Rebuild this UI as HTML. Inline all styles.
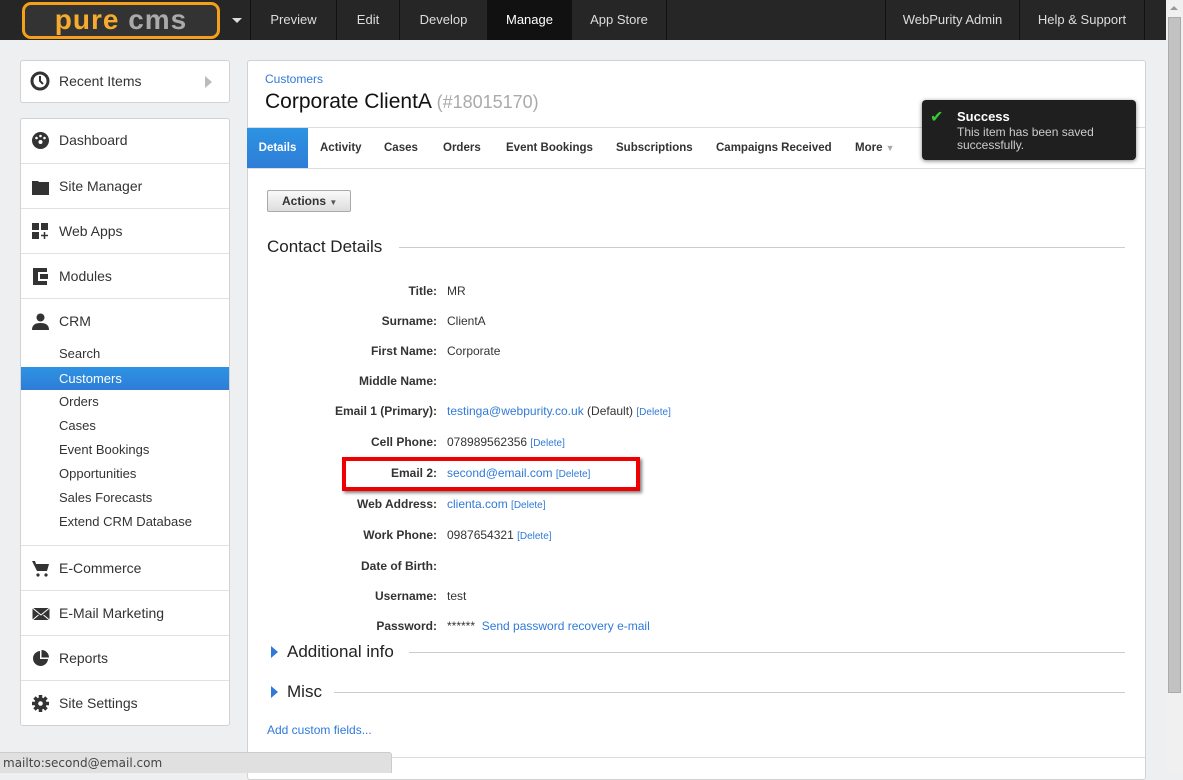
<!DOCTYPE html>
<html><head><style>
*{margin:0;padding:0;box-sizing:border-box}
body{width:1183px;height:773px;overflow:hidden;background:#eeeff1;font-family:"Liberation Sans",sans-serif;font-size:13px;color:#333;position:relative}
.a{position:absolute}
.top{left:0;top:0;width:1166px;height:40px;background:#262626}
.nav{top:0;height:40px;line-height:40px;color:#ddd;font-size:13px;text-align:center;border-left:1px solid #111}
.box{background:#fff;border:1px solid #d2d2d2;border-radius:3px}
.mi{left:21px;width:208px;height:45px;border-top:1px solid #e2e2e2;padding-left:38px;line-height:44px;font-size:14px;color:#333}
.ic{position:absolute;left:11px;top:14px;width:17px;height:17px}
.sub{left:21px;width:208px;height:24px;line-height:24px;padding-left:38px;font-size:13px;color:#333}
.lab{left:250px;width:187px;text-align:right;font-weight:bold;font-size:12px;color:#333}
.val{left:447px;font-size:12px;color:#333;white-space:nowrap}
.lnk{color:#2f7ad8}
.del{color:#2f7ad8;font-size:10px}
.tab{top:128px;height:40px;line-height:40px;font-size:11.5px;font-weight:bold;color:#333}
</style></head><body>
<div class="a top"></div>
<div class="a" style="left:22px;top:2px;width:198px;height:37px;border:3px solid #f5a01a;border-radius:9px;background:#333;text-align:center;line-height:30px;font-size:28px;font-weight:bold;letter-spacing:1px"><span style="color:#f5ac2e">pure</span> <span style="color:#aaa">cms</span></div>
<div class="a" style="left:232px;top:18px;border-left:5px solid transparent;border-right:5px solid transparent;border-top:5px solid #ddd"></div>
<div class="a nav" style="left:250px;width:86px">Preview</div>
<div class="a nav" style="left:336px;width:63px">Edit</div>
<div class="a nav" style="left:399px;width:88px">Develop</div>
<div class="a nav" style="left:487px;width:84px;background:#111;color:#fff">Manage</div>
<div class="a nav" style="left:571px;width:96px;border-right:1px solid #111">App Store</div>
<div class="a nav" style="left:885px;width:134px">WebPurity Admin</div>
<div class="a nav" style="left:1019px;width:126px;border-right:1px solid #111">Help &amp; Support</div>
<div class="a" style="left:1166px;top:0;width:17px;height:773px;background:#f0f0f0"></div>
<div class="a" style="left:1168px;top:17px;width:13px;height:676px;background:#c2c2c2;border:1px solid #aaa"></div>
<div class="a" style="left:1170px;top:6px;border-left:4px solid transparent;border-right:4px solid transparent;border-bottom:4px solid #999"></div>

<div class="a box" style="left:20px;top:60px;width:210px;height:43px"></div>
<svg class="a" style="left:30px;top:71px" width="20" height="20" viewBox="0 0 20 20"><circle cx="10" cy="10" r="8" fill="none" stroke="#333" stroke-width="3"/><path d="M10 5v5l3 3" fill="none" stroke="#333" stroke-width="2"/></svg>
<div class="a" style="left:59px;top:60px;line-height:42px;font-size:14px">Recent Items</div>
<div class="a" style="left:205px;top:76px;border-top:6px solid transparent;border-bottom:6px solid transparent;border-left:7px solid #bbb"></div>

<div class="a box" style="left:20px;top:118px;width:210px;height:608px"></div>
<div class="a mi" style="top:118px;border-top:none"><svg class="ic" viewBox="0 0 17 17"><circle cx="8.5" cy="8.5" r="8.5" fill="#333"/><circle cx="8.5" cy="4" r="1.3" fill="#fff"/><circle cx="4.5" cy="6" r="1.3" fill="#fff"/><circle cx="12.5" cy="6" r="1.3" fill="#fff"/><circle cx="8.5" cy="10" r="2" fill="#fff"/></svg>Dashboard</div>
<div class="a mi" style="top:163px"><svg class="ic" viewBox="0 0 17 17"><path d="M0 3h6l1 1h10v13H0z" fill="#333"/></svg>Site Manager</div>
<div class="a mi" style="top:208px"><svg class="ic" viewBox="0 0 17 17"><path d="M0 0h7v7H0zM9 0h7v7H9zM0 9h7v7H0z" fill="#333"/><path d="M12.5 9v7M9 12.5h7" stroke="#333" stroke-width="1.5"/></svg>Web Apps</div>
<div class="a mi" style="top:253px"><svg class="ic" viewBox="0 0 17 17"><path d="M1 0h14v4H6v9h9v4H1z M8 6h8v5H8z" fill="#333"/></svg>Modules</div>
<div class="a mi" style="top:298px"><svg class="ic" viewBox="0 0 17 17"><circle cx="8.5" cy="4.5" r="4" fill="#333"/><path d="M0 17c0-5 3-7 8.5-7s8.5 2 8.5 7z" fill="#333"/></svg>CRM</div>
<div class="a sub" style="top:342px">Search</div>
<div class="a sub" style="top:367px;background:linear-gradient(#2d93e2,#2e7dd8);color:#fff;height:23px">Customers</div>
<div class="a sub" style="top:390px">Orders</div>
<div class="a sub" style="top:414px">Cases</div>
<div class="a sub" style="top:438px">Event Bookings</div>
<div class="a sub" style="top:462px">Opportunities</div>
<div class="a sub" style="top:486px">Sales Forecasts</div>
<div class="a sub" style="top:510px">Extend CRM Database</div>
<div class="a mi" style="top:545px"><svg class="ic" viewBox="0 0 17 17"><path d="M0 1h3l1 3h13l-2 7H5z" fill="#333"/><circle cx="6" cy="15" r="1.6" fill="#333"/><circle cx="14" cy="15" r="1.6" fill="#333"/></svg>E-Commerce</div>
<div class="a mi" style="top:590px"><svg class="ic" viewBox="0 0 17 17" style="width:18px"><path d="M0 3h17v12H0z" fill="#333"/><path d="M0 3l8.5 7 8.5-7M0 15l6-5M17 15l-6-5" stroke="#fff" fill="none"/></svg>E-Mail Marketing</div>
<div class="a mi" style="top:635px"><svg class="ic" viewBox="0 0 17 17"><path d="M8 1A7.5 7.5 0 1 0 16 9H8z" fill="#333"/><path d="M9.5 0v7.5H17A7.5 7.5 0 0 0 9.5 0z" fill="#333"/></svg>Reports</div>
<div class="a mi" style="top:680px"><svg class="ic" viewBox="0 0 17 17"><circle cx="8.5" cy="8.5" r="6" fill="#333"/><path d="M8.5 0v17M0 8.5h17M2.5 2.5l12 12M14.5 2.5l-12 12" stroke="#333" stroke-width="3.5"/><circle cx="8.5" cy="8.5" r="2.3" fill="#fff"/></svg>Site Settings</div>

<div class="a" style="left:247px;top:60px;width:899px;height:720px;background:#fff;border:1px solid #d2d2d2;border-radius:3px"></div>
<div class="a lnk" style="left:265px;top:72px;font-size:12px">Customers</div>
<div class="a" style="left:265px;top:90px;font-size:21px;color:#111">Corporate ClientA <span style="color:#aaa;font-size:18px">(#18015170)</span></div>
<div class="a" style="left:248px;top:127px;width:897px;height:42px;border-top:1px solid #ddd;border-bottom:1px solid #ddd"></div>
<div class="a tab" style="left:247px;width:61px;background:linear-gradient(#2d93e2,#2e7dd8);color:#fff;text-align:center">Details</div>
<div class="a tab" style="left:320px">Activity</div>
<div class="a tab" style="left:384px">Cases</div>
<div class="a tab" style="left:443px">Orders</div>
<div class="a tab" style="left:506px">Event Bookings</div>
<div class="a tab" style="left:616px">Subscriptions</div>
<div class="a tab" style="left:716px">Campaigns Received</div>
<div class="a tab" style="left:855px">More <span style="color:#aaa;font-size:9px">▼</span></div>

<div class="a" style="left:922px;top:100px;width:214px;height:60px;background:#1f1f1f;border-radius:4px;box-shadow:0 1px 4px rgba(0,0,0,.5)"></div>
<div class="a" style="left:930px;top:107px;color:#3c3;font-size:16px">✔</div>
<div class="a" style="left:957px;top:109px;color:#fff;font-weight:bold;font-size:13px">Success</div>
<div class="a" style="left:957px;top:126px;color:#ccc;font-size:12px;line-height:12.5px">This item has been saved<br>successfully.</div>

<div class="a" style="left:267px;top:190px;width:84px;height:22px;border:1px solid #aaa;border-radius:2px;background:linear-gradient(#fafafa,#ddd);font-size:12px;font-weight:bold;line-height:20px;padding-left:14px">Actions <span style="font-size:8px;color:#555">▼</span></div>
<div class="a" style="left:267px;top:237px;font-size:17px;color:#222">Contact Details</div>
<div class="a" style="left:399px;top:247px;width:726px;height:1px;background:#ccc"></div>

<div class="a lab" style="top:284px">Title:</div><div class="a val" style="top:284px">MR</div>
<div class="a lab" style="top:314px">Surname:</div><div class="a val" style="top:314px">ClientA</div>
<div class="a lab" style="top:344px">First Name:</div><div class="a val" style="top:344px">Corporate</div>
<div class="a lab" style="top:374px">Middle Name:</div>
<div class="a lab" style="top:404px">Email 1 (Primary):</div><div class="a val" style="top:404px"><span class="lnk">testinga@webpurity.co.uk</span> (Default) <span class="del">[Delete]</span></div>
<div class="a lab" style="top:435px">Cell Phone:</div><div class="a val" style="top:435px">078989562356 <span class="del">[Delete]</span></div>
<div class="a" style="left:342px;top:457px;width:298px;height:34px;border:4px solid #e00;box-shadow:2px 2px 3px rgba(0,0,0,.5)"></div>
<div class="a lab" style="top:466px">Email 2:</div><div class="a val" style="top:466px"><span class="lnk">second@email.com</span> <span class="del">[Delete]</span></div>
<div class="a lab" style="top:497px">Web Address:</div><div class="a val" style="top:497px"><span class="lnk">clienta.com</span> <span class="del">[Delete]</span></div>
<div class="a lab" style="top:528px">Work Phone:</div><div class="a val" style="top:528px">0987654321 <span class="del">[Delete]</span></div>
<div class="a lab" style="top:559px">Date of Birth:</div>
<div class="a lab" style="top:589px">Username:</div><div class="a val" style="top:589px">test</div>
<div class="a lab" style="top:619px">Password:</div><div class="a val" style="top:619px">****** &nbsp;<span class="lnk">Send password recovery e-mail</span></div>

<div class="a" style="left:271px;top:646px;border-top:6px solid transparent;border-bottom:6px solid transparent;border-left:7px solid #2f7ad8"></div>
<div class="a" style="left:287px;top:642px;font-size:17px;color:#222">Additional info</div>
<div class="a" style="left:409px;top:652px;width:716px;height:1px;background:#ccc"></div>
<div class="a" style="left:271px;top:686px;border-top:6px solid transparent;border-bottom:6px solid transparent;border-left:7px solid #2f7ad8"></div>
<div class="a" style="left:287px;top:682px;font-size:17px;color:#222">Misc</div>
<div class="a" style="left:334px;top:692px;width:791px;height:1px;background:#ccc"></div>
<div class="a lnk" style="left:267px;top:723px;font-size:12px">Add custom fields...</div>
<div class="a" style="left:248px;top:757px;width:897px;height:1px;background:#ddd"></div>
<div class="a" style="left:0;top:752px;width:392px;height:21px;background:#e0e0e0;border-top:1px solid #ccc;border-right:1px solid #ccc;border-radius:0 3px 0 0;font-family:'DejaVu Sans',sans-serif;font-size:12px;color:#444;line-height:20px;padding-left:3px">mailto:second@email.com</div>
</body></html>
